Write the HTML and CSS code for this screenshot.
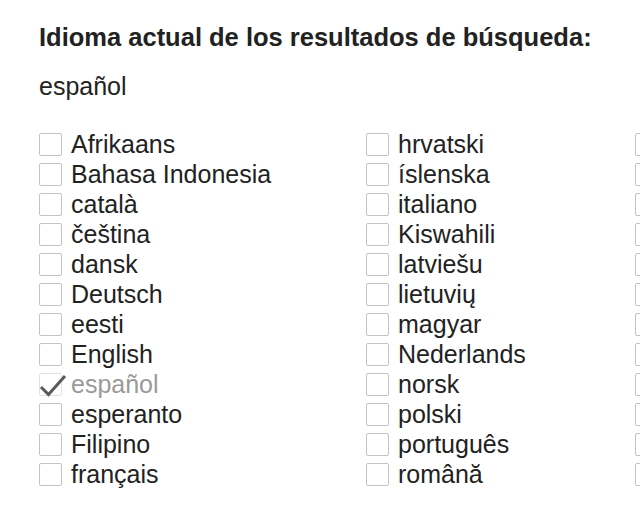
FILE: index.html
```html
<!DOCTYPE html>
<html lang="es">
<head>
<meta charset="utf-8">
<title>Idioma de los resultados</title>
<link rel="stylesheet" href="styles.css">
</head>
<body>
<div class="page">
  <h1 class="title">Idioma actual de los resultados de búsqueda:</h1>
  <p class="current">español</p>
  <div class="langs">
    <label class="lang"><span class="box"></span><span class="name">Afrikaans</span></label>
    <label class="lang"><span class="box"></span><span class="name">Bahasa Indonesia</span></label>
    <label class="lang"><span class="box"></span><span class="name">català</span></label>
    <label class="lang"><span class="box"></span><span class="name">čeština</span></label>
    <label class="lang"><span class="box"></span><span class="name">dansk</span></label>
    <label class="lang"><span class="box"></span><span class="name">Deutsch</span></label>
    <label class="lang"><span class="box"></span><span class="name">eesti</span></label>
    <label class="lang"><span class="box"></span><span class="name">English</span></label>
    <label class="lang lang-disabled"><span class="box box-checked"><svg class="check" width="30" height="26" viewBox="0 0 30 26"><path d="M2 14 L9.5 21.5 L26 3" fill="none" stroke="#5a5a5a" stroke-width="3"/></svg></span><span class="name">español</span></label>
    <label class="lang"><span class="box"></span><span class="name">esperanto</span></label>
    <label class="lang"><span class="box"></span><span class="name">Filipino</span></label>
    <label class="lang"><span class="box"></span><span class="name">français</span></label>

    <label class="lang"><span class="box"></span><span class="name">hrvatski</span></label>
    <label class="lang"><span class="box"></span><span class="name">íslenska</span></label>
    <label class="lang"><span class="box"></span><span class="name">italiano</span></label>
    <label class="lang"><span class="box"></span><span class="name">Kiswahili</span></label>
    <label class="lang"><span class="box"></span><span class="name">latviešu</span></label>
    <label class="lang"><span class="box"></span><span class="name">lietuvių</span></label>
    <label class="lang"><span class="box"></span><span class="name">magyar</span></label>
    <label class="lang"><span class="box"></span><span class="name">Nederlands</span></label>
    <label class="lang"><span class="box"></span><span class="name">norsk</span></label>
    <label class="lang"><span class="box"></span><span class="name">polski</span></label>
    <label class="lang"><span class="box"></span><span class="name">português</span></label>
    <label class="lang"><span class="box"></span><span class="name">română</span></label>

    <span class="lang" aria-label="slovenčina"><span class="box"></span></span>
    <span class="lang" aria-label="slovenščina"><span class="box"></span></span>
    <span class="lang" aria-label="suomi"><span class="box"></span></span>
    <span class="lang" aria-label="svenska"><span class="box"></span></span>
    <span class="lang" aria-label="Tiếng Việt"><span class="box"></span></span>
    <span class="lang" aria-label="Türkçe"><span class="box"></span></span>
    <span class="lang" aria-label="Ελληνικά"><span class="box"></span></span>
    <span class="lang" aria-label="беларуская"><span class="box"></span></span>
    <span class="lang" aria-label="български"><span class="box"></span></span>
    <span class="lang" aria-label="русский"><span class="box"></span></span>
    <span class="lang" aria-label="српски"><span class="box"></span></span>
    <span class="lang" aria-label="українська"><span class="box"></span></span>
  </div>
</div>
</body>
</html>
```

FILE: styles.css
```css
html, body {
  margin: 0;
  padding: 0;
  background: #ffffff;
  overflow: hidden;
}

.page {
  padding: 22px 0 0 39px;
  font-family: "Liberation Sans", Arial, Helvetica, sans-serif;
  color: #222222;
  font-size: 25px;
  line-height: 30px;
}

.title {
  margin: 0;
  font-size: 25.5px;
  line-height: 30px;
  font-weight: bold;
  white-space: nowrap;
}

.current {
  margin: 19px 0 0;
}

.langs {
  margin-top: 28px;
  display: grid;
  grid-template-columns: 327px 269px 30px;
  grid-template-rows: repeat(12, 30px);
  grid-auto-flow: column;
}

.lang {
  display: flex;
  align-items: center;
  white-space: nowrap;
}

.box {
  position: relative;
  flex: none;
  width: 23px;
  height: 23px;
  box-sizing: border-box;
  border: 1px solid #c3c3c3;
  border-radius: 2px;
  background: #ffffff;
  margin-right: 9px;
}

.box-checked {
  border-color: #e3e3e3;
}

.check {
  position: absolute;
  left: -1px;
  top: -1px;
  overflow: visible;
}

.lang-disabled .name {
  color: #9a9a9a;
}
```
